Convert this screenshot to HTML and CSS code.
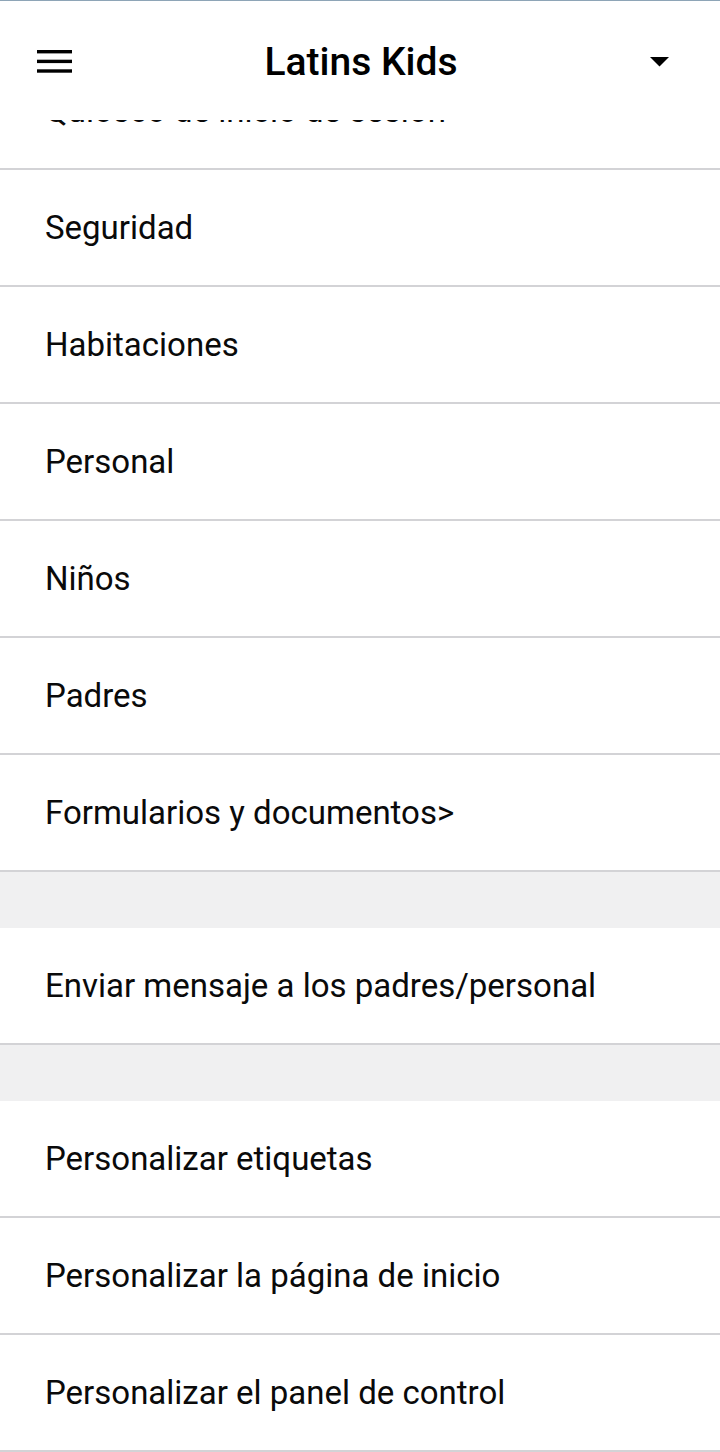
FILE: index.html
```html
<!DOCTYPE html>
<html lang="es">
<head>
<meta charset="utf-8">
<title>Latins Kids</title>
<link rel="stylesheet" href="styles.css">
</head>
<body>
<header class="appbar">
  <button class="icon-btn menu-btn" aria-label="Menú">
    <svg width="35" height="23" viewBox="0 0 35 23"><rect x="0" y="0" width="35" height="3.4" fill="#000"/><rect x="0" y="9.7" width="35" height="3.4" fill="#000"/><rect x="0" y="19.3" width="35" height="3.4" fill="#000"/></svg>
  </button>
  <h1 class="title">Latins Kids</h1>
  <button class="icon-btn drop-btn" aria-label="Más">
    <svg width="19" height="10" viewBox="0 0 19 10"><polygon points="0,0 19,0 9.5,9.5" fill="#000"/></svg>
  </button>
</header>
<main class="menu">
  <ul class="group">
    <li class="item">Quiosco de inicio de sesión</li>
    <li class="item">Seguridad</li>
    <li class="item">Habitaciones</li>
    <li class="item">Personal</li>
    <li class="item">Niños</li>
    <li class="item">Padres</li>
    <li class="item">Formularios y documentos&gt;</li>
  </ul>
  <div class="spacer"></div>
  <ul class="group">
    <li class="item">Enviar mensaje a los padres/personal</li>
  </ul>
  <div class="spacer"></div>
  <ul class="group">
    <li class="item">Personalizar etiquetas</li>
    <li class="item">Personalizar la página de inicio</li>
    <li class="item">Personalizar el panel de control</li>
  </ul>
</main>
</body>
</html>
```
FILE: styles.css
```css
* { box-sizing: border-box; }
html, body {
  margin: 0;
  padding: 0;
  background: #ffffff;
  font-family: Roboto, "Noto Sans", "Liberation Sans", sans-serif;
  color: #000;
}
body { width: 720px; height: 1452px; overflow: hidden; }
.appbar {
  position: fixed;
  top: 0;
  left: 0;
  width: 720px;
  height: 120px;
  background: #fff;
  border-top: 1px solid #8ea5b7;
  z-index: 2;
  display: flex;
  align-items: flex-start;
}
.icon-btn {
  background: none;
  border: 0;
  padding: 0;
  display: flex;
}
.menu-btn { margin: 49px 0 0 37px; }
.title {
  flex: 1;
  margin: 37px 0 0 0;
  text-align: center;
  font-size: 39px;
  font-weight: 500;
  line-height: 48px;
  padding-left: 0;
}
.drop-btn { margin: 56px 51px 0 0; }
.menu { padding-top: 53px; }
.group { list-style: none; margin: 0; padding: 0; }
.item {
  height: 117px;
  display: flex;
  align-items: center;
  padding: 0 0 0 45px;
  font-size: 33px;
  line-height: 40px;
  color: #0a0a0a;
  border-bottom: 2px solid #d3d3d6;
}
.spacer { height: 56px; background: #f0f0f1; }
```
